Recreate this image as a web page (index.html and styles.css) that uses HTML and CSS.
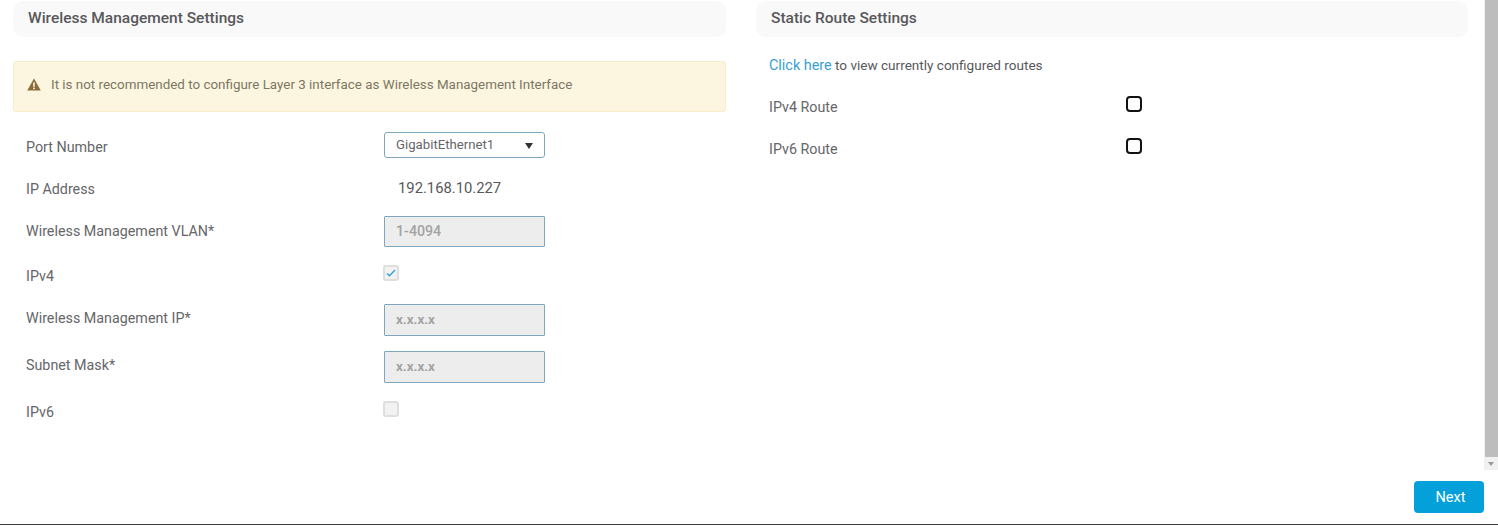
FILE: index.html
```html
<!DOCTYPE html>
<html lang="en">
<head>
  <meta charset="UTF-8">
  <meta name="viewport" content="width=device-width, initial-scale=1.0">
  <title>Wireless Management Settings</title>
  <link rel="stylesheet" href="styles.css">
</head>
<body>
  <div class="top">
    <div class="columns">

      <!-- Wireless management -->
      <section class="left">
        <h2 class="title">Wireless Management Settings</h2>
        <div class="alert">
          <svg class="alert-icon" viewBox="0 0 14 13" width="14" height="13">
            <path d="M7 .5 13.8 12.6H.2Z" fill="#8a6d3b"/>
            <rect x="6.2" y="4.4" width="1.6" height="4.4" fill="#fcf6e1"/>
            <rect x="6.2" y="9.6" width="1.6" height="1.6" fill="#fcf6e1"/>
          </svg>
          <span>It is not recommended to configure Layer 3 interface as Wireless Management Interface</span>
        </div>
        <div class="form">
          <div class="row row-port">
            <label>Port Number</label>
            <div class="select">GigabitEthernet1<span class="caret"></span></div>
          </div>
          <div class="row row-ip">
            <label>IP Address</label>
            <span class="value">192.168.10.227</span>
          </div>
          <div class="row row-vlan">
            <label>Wireless Management VLAN*</label>
            <input class="input" type="text" placeholder="1-4094" disabled>
          </div>
          <div class="row row-v4">
            <label>IPv4</label>
            <span class="check">
              <svg viewBox="0 0 10 8" width="10" height="8"><path d="M1 4.4 3.5 6.8 9 1" fill="none" stroke="#2fa4d9" stroke-width="1.4"/></svg>
            </span>
          </div>
          <div class="row row-mgmt">
            <label>Wireless Management IP*</label>
            <input class="input input-ip" type="text" placeholder="x.x.x.x" disabled>
          </div>
          <div class="row row-mask">
            <label>Subnet Mask*</label>
            <input class="input input-ip" type="text" placeholder="x.x.x.x" disabled>
          </div>
          <div class="row row-v6">
            <label>IPv6</label>
            <span class="check"></span>
          </div>
        </div>
      </section>

      <!-- Static routes -->
      <section class="right">
        <h2 class="title title-right">Static Route Settings</h2>
        <p class="routes-link"><a href="#">Click here</a> to view currently configured routes</p>
        <div class="route">
          <label>IPv4 Route</label>
          <span class="route-check"></span>
        </div>
        <div class="route">
          <label>IPv6 Route</label>
          <span class="route-check"></span>
        </div>
      </section>

    </div>
    <div class="scrollbar">
      <div class="thumb"></div>
      <div class="arrow"></div>
    </div>
  </div>

  <div class="footer">
    <button class="next">Next</button>
  </div>
</body>
</html>
```

FILE: styles.css
```css
* { box-sizing: border-box; }

body {
  margin: 0;
  height: 528px;
  overflow: hidden;
  background-color: #fff;
  color: #666669;
  font-family: Roboto, "Liberation Sans", sans-serif;
  font-size: 14.3px;
}

.top {
  display: flex;
  height: 470px;
}
.columns {
  flex: 1;
  display: flex;
  padding: 1px 16px 0 13px;
  gap: 30px;
}
.left { width: 713px; }
.right { width: 712px; }

.title {
  margin: 0;
  height: 36px;
  padding-left: 15px;
  background-color: #f9f9f9;
  border-radius: 10px;
  font-size: 15.5px;
  font-weight: 500;
  line-height: 35px;
  color: #58585b;
}

.alert {
  display: flex;
  align-items: center;
  gap: 10px;
  height: 51px;
  margin-top: 24px;
  padding: 0 0 4px 13px;
  background-color: #fcf6e1;
  border: 1px solid #f8eccb;
  border-radius: 3px;
  font-size: 13.4px;
  color: #7d7661;
}
.alert-icon { flex: none; }

.form { padding: 20px 0 0 13px; }
.row {
  display: grid;
  grid-template-columns: 358px 161px;
  align-items: center;
}
.row-port { height: 26px; }
.row-port label { margin-top: 3px; }
.row-ip { height: 26px; margin-top: 17px; }
.row-ip label { margin-top: 1px; }
.row-vlan { height: 31px; margin-top: 15px; }
.row-vlan label { margin-top: -2px; }
.row-v4 { height: 16px; margin-top: 14px; }
.row-v4 label { margin-top: 7px; }
.row-mgmt { height: 32px; margin-top: 27px; }
.row-mgmt label { margin-top: -4px; }
.row-mask { height: 32px; margin-top: 15px; }
.row-mask label { margin-top: -4px; }
.row-v6 { height: 16px; margin-top: 15px; }
.row-v6 label { margin-top: 6px; }

.value { padding-left: 14px; font-size: 14.8px; color: #58585b; }

.select {
  display: flex;
  align-items: center;
  justify-content: space-between;
  height: 26px;
  padding: 0 11px 2px 11px;
  border: 1px solid #7ea7bd;
  border-radius: 3px;
  font-size: 13.2px;
}
.caret {
  width: 0;
  height: 0;
  margin-top: 4px;
  border-left: 4px solid transparent;
  border-right: 4px solid transparent;
  border-top: 6px solid #333;
}

.input {
  width: 161px;
  height: 100%;
  padding: 0 11px 2px;
  background-color: #ededed;
  border: 1px solid #7ea7bd;
  border-radius: 1px;
  font-family: inherit;
  font-size: 14.2px;
  font-weight: 500;
}
.input-ip { font-size: 13.4px; font-weight: 700; }
.input::placeholder { color: #a3a3a3; opacity: 1; }

.check {
  display: flex;
  align-items: center;
  justify-content: center;
  width: 16px;
  height: 16px;
  margin-left: -1px;
  background-color: #f2f2f2;
  border: 2px solid #dedede;
  border-radius: 3px;
}

.routes-link {
  margin: 20px 0 0 13px;
  font-size: 13.55px;
  line-height: 17px;
  color: #58585b;
}
.routes-link a { font-size: 14.4px; color: #3c9fd0; text-decoration: none; }

.route {
  display: flex;
  align-items: center;
  height: 20px;
  margin: 22px 0 0 13px;
}
.route + .route { margin-top: 22px; }
.route label { width: 357px; margin-top: 2px; }
.route-check {
  width: 16px;
  height: 16px;
  margin-top: -4px;
  border: 2px solid #111;
  border-radius: 4px;
}

.scrollbar {
  flex: none;
  display: flex;
  flex-direction: column;
  width: 14px;
  padding-left: 1px;
  background-color: #f1f1f1;
}
.thumb { flex: 1; background-color: #bdbdbd; }
.arrow { position: relative; height: 13px; }
.arrow::after {
  content: "";
  position: absolute;
  left: 3px;
  top: 5px;
  border-left: 3px solid transparent;
  border-right: 3px solid transparent;
  border-top: 4px solid #9a9a9a;
}

.footer {
  display: flex;
  justify-content: flex-end;
  height: 55px;
  padding: 11px 14px 0 0;
  border-bottom: 1px solid #3c3c3c;
}
.next {
  width: 70px;
  height: 32px;
  padding: 0 0 0 3px;
  background-color: #04a0da;
  color: #fff;
  border: none;
  border-radius: 4px;
  font-family: inherit;
  font-size: 14.5px;
}
```
